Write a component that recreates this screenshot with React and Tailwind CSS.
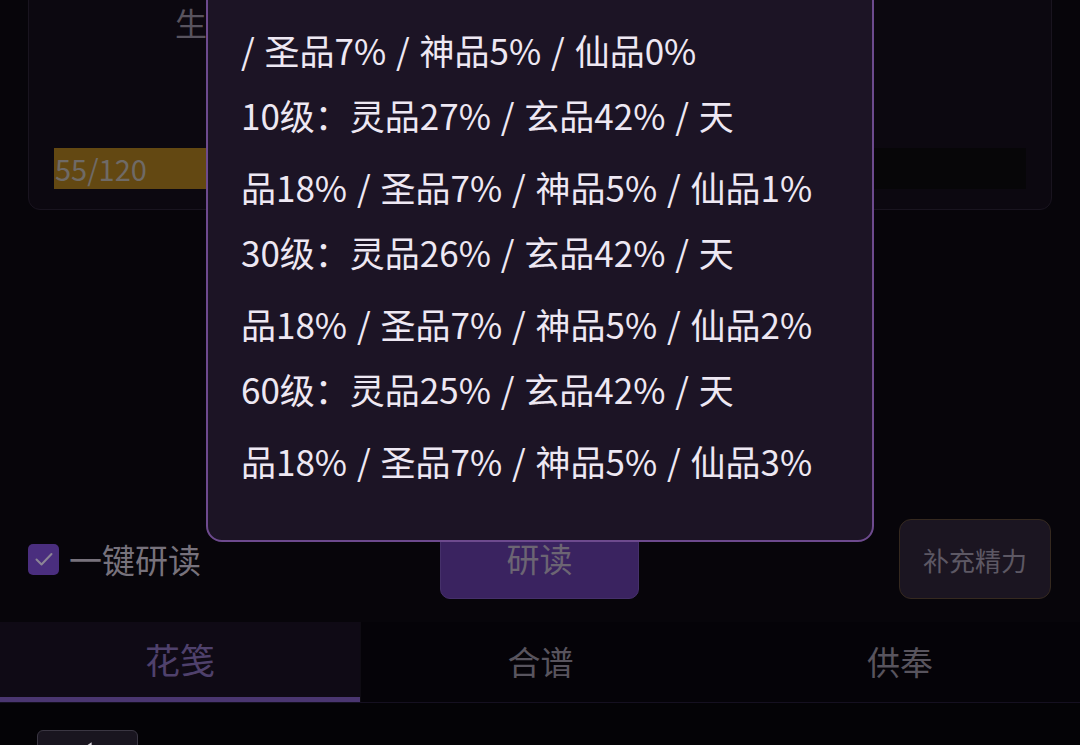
import React from "react";

const FONT = { fontFamily: '"Noto Sans CJK SC", "Noto Sans", sans-serif' };

// Drop-rate table shown in the popup; each entry is split into its display lines
const rates = [
  ["10级：灵品27% / 玄品42% / 天", "品18% / 圣品7% / 神品5% / 仙品1%"],
  ["30级：灵品26% / 玄品42% / 天", "品18% / 圣品7% / 神品5% / 仙品2%"],
  ["60级：灵品25% / 玄品42% / 天", "品18% / 圣品7% / 神品5% / 仙品3%"],
];

function CheckIcon() {
  return (
    <svg viewBox="0 0 24 24" className="w-[24px] h-[24px]" fill="none">
      <path d="M4.5 12.5l5 5L19.5 7" stroke="#8c8596" strokeWidth="2" strokeLinecap="round" strokeLinejoin="round" />
    </svg>
  );
}

export default function App() {
  return (
    <div
      className="relative w-[1080px] h-[745px] overflow-hidden bg-[#07050a] flex flex-col"
      style={FONT}
    >
      {/* stats card */}
      <div className="px-[28px] shrink-0">
        <div className="-mt-[30px] h-[240px] rounded-[12px] border border-[#19141f] bg-[#0c0810] px-[25px] flex flex-col">
          <div className="pt-[31px] pl-[121px] text-[32px] leading-[40px] text-[#58535e]">生</div>
          <div className="mt-[106px] h-[41px] bg-[#070608] flex">
            <div className="w-[420px] h-full bg-[#634812] flex items-center">
              <span className="pl-[1px] text-[29px] leading-none text-[#6f6a66]">55/120</span>
            </div>
          </div>
        </div>
      </div>

      {/* action row */}
      <div className="mt-[309px] h-[80px] shrink-0 flex items-center pl-[28px] pr-[29px]">
        <div className="flex items-center gap-[10px] w-[412px]">
          <div className="w-[31px] h-[31px] rounded-[5px] bg-[#4a2e7e] flex items-center justify-center">
            <CheckIcon />
          </div>
          <span className="text-[33px] leading-none text-[#77727c]">一键研读</span>
        </div>
        <button className="w-[199px] h-[79px] rounded-[10px] bg-[#3a2360] border border-[#45306a] text-[33px] text-[#6c6573] flex items-center justify-center">
          研读
        </button>
        <div className="flex-1" />
        <button className="w-[152px] h-[80px] rounded-[12px] bg-[#1b1521] border border-[#35291f] text-[26px] text-[#5d5864] flex items-center justify-center">
          补充精力
        </button>
      </div>

      {/* tabs */}
      <div className="mt-[23px] h-[81px] shrink-0 grid grid-cols-3 border-b border-[#151020]">
        <div className="bg-[#0f0a15] border-b-[5px] border-[#4a3670] flex items-center justify-center text-[35px] text-[#4f416c]">
          花笺
        </div>
        <div className="bg-[#050308] border-l border-[#0e0b12] flex items-center justify-center text-[33px] text-[#58545e]">
          合谱
        </div>
        <div className="bg-[#050308] flex items-center justify-center text-[33px] text-[#58545e]">
          供奉
        </div>
      </div>

      {/* lower panel */}
      <div className="flex-1 bg-[#040306] pl-[37px] pt-[27px]">
        <button className="w-[101px] h-[40px] rounded-[6px] bg-[#19151f] border border-[#3a3642] flex items-start pl-[36px] pt-[8px]">
          <svg viewBox="0 0 20 20" className="w-[22px] h-[22px]">
            <path d="M16 3 L4 11 L16 19 Z" fill="#d8d4dc" />
          </svg>
        </button>
      </div>

      {/* drop-rate popup */}
      <div className="absolute left-[206px] top-[-20px] w-[668px] h-[562px] rounded-b-[16px] border-2 border-[#6d4a8e] bg-[#1c1425] pl-[33px] pt-[32px] text-[#eee8f3] text-[35px] whitespace-nowrap [word-spacing:2px]">
        <div className="leading-[72px]">/ 圣品7% / 神品5% / 仙品0%</div>
        {rates.map((lines, i) => (
          <div key={i} className="-mt-[7px] leading-[72px]">
            <div>{lines[0]}</div>
            <div>{lines[1]}</div>
          </div>
        ))}
      </div>
    </div>
  );
}
